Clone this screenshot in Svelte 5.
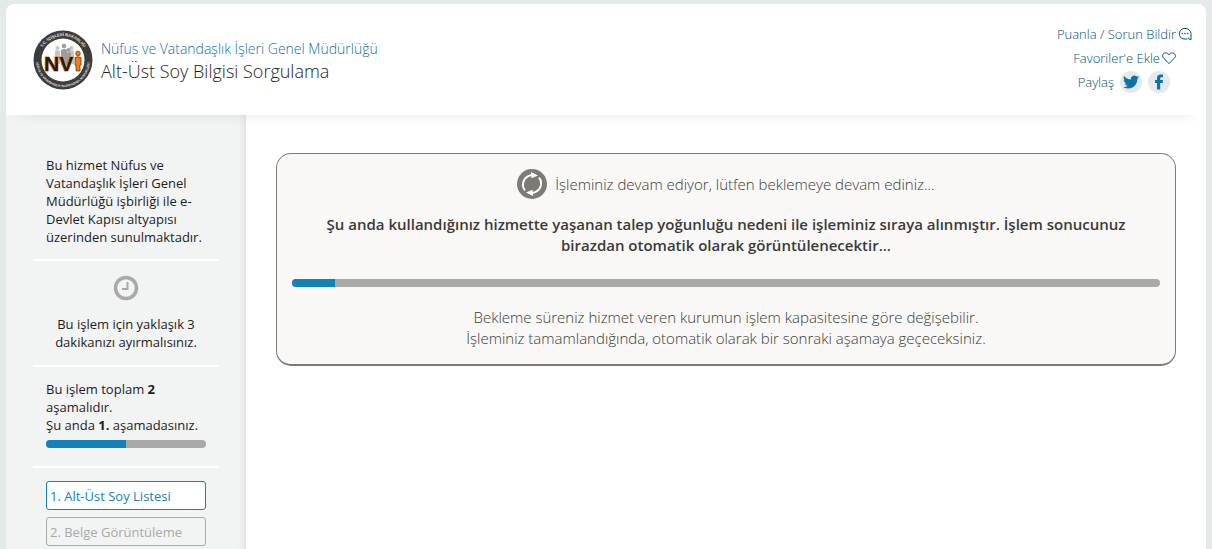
<script lang="ts">
  const institution = 'Nüfus ve Vatandaşlık İşleri Genel Müdürlüğü';
  const service = 'Alt-Üst Soy Bilgisi Sorgulama';

  const steps = ['Alt-Üst Soy Listesi', 'Belge Görüntüleme'];
  let currentStep = $state(1);
  let waitPercent = $state(5);

  let stepPercent = $derived((currentStep / steps.length) * 100);
</script>

<div class="page">
  <header class="service-header">
    <a class="brand" href="#kurum">
      <svg class="logo" viewBox="0 0 60 60" aria-hidden="true">
        <defs>
          <path id="ring-top" d="M6 30a24 24 0 0 1 48 0" />
          <path id="ring-bottom" d="M3.900 23a27 27 0 1 0 52.200 0" />
        </defs>
        <circle cx="30" cy="30" r="29.500" fill="#3b3c3e" />
        <circle cx="30" cy="30" r="21.500" fill="#fff" />
        <text class="ring-text">
          <textPath href="#ring-top" startOffset="50%" text-anchor="middle">T.C. İÇİŞLERİ BAKANLIĞI</textPath>
        </text>
        <text class="ring-text small">
          <textPath href="#ring-bottom" startOffset="50%" text-anchor="middle">NÜFUS VE VATANDAŞLIK İŞLERİ GENEL MÜDÜRLÜĞÜ</textPath>
        </text>
        <g fill="#c4c4c4">
          <circle cx="24.500" cy="18" r="2" /><path d="M22 21q2.500-1.500 5 0v13h-5z" />
          <circle cx="38.500" cy="18" r="2" /><path d="M36 21q2.500-1.500 5 0v13h-5z" />
        </g>
        <g fill="#9c9c9c">
          <circle cx="31" cy="16" r="2.300" /><path d="M28 20q3-2 6 0v15h-6z" />
          <circle cx="35.500" cy="20" r="2" /><path d="M33 23q2.500-1.500 5 0v12h-5z" />
        </g>
        <text class="logo-text" x="11" y="41">NV</text>
        <g fill="#ef7d1a" stroke="#5a2c08" stroke-width="0.700">
          <circle cx="45" cy="23.500" r="2.300" />
          <path d="M42 27.500q3-1.500 6 0v7.500h-1v6h-4v-6h-1z" />
        </g>
      </svg>
      <h1 class="titles">
        <span class="institution">{institution}</span>
        <span class="service">{service}</span>
      </h1>
    </a>

    <nav class="actions" aria-label="Hizmet işlemleri">
      <a class="action" href="#puanla">
        Puanla / Sorun Bildir
        <svg class="action-icon" viewBox="0 0 14 14" aria-hidden="true">
          <path d="M9.500 12H6A5.300 5.300 0 0 1 6 1.500h2A5.300 5.300 0 0 1 13 6.700v6.100q-2.300 0-2.700-2.300" fill="none" stroke="currentColor" />
          <circle cx="4.300" cy="6.500" r="0.800" /><circle cx="7" cy="6.500" r="0.800" /><circle cx="9.700" cy="6.500" r="0.800" />
        </svg>
      </a>
      <a class="action favorite" href="#favori">
        Favoriler'e Ekle
        <svg class="action-icon" viewBox="0 0 14 14" aria-hidden="true">
          <path d="M7 12.500 1.600 7.200C-.5 4.800 1 2 3.500 1.900 5.200 1.800 6.400 2.800 7 4c.6-1.200 1.800-2.200 3.500-2.100 2.500.1 4 2.900 1.900 5.300z" fill="none" stroke="currentColor" />
        </svg>
      </a>
      <div class="share">
        <span>Paylaş</span>
        <a class="social" href="#twitter" aria-label="Twitter">
          <svg width="16" height="16" viewBox="0 0 24 24" aria-hidden="true">
            <path d="M23.950 4.570a10 10 0 0 1-2.820.770 4.960 4.960 0 0 0 2.160-2.720 9.900 9.900 0 0 1-3.120 1.180 4.920 4.920 0 0 0-8.380 4.480A13.930 13.930 0 0 1 1.640 3.160a4.820 4.820 0 0 0-.670 2.480c0 1.710.870 3.210 2.190 4.100a4.900 4.900 0 0 1-2.230-.620v.060a4.920 4.920 0 0 0 3.950 4.830 5 5 0 0 1-2.210.080 4.940 4.940 0 0 0 4.600 3.420A9.870 9.870 0 0 1 0 19.540a13.990 13.990 0 0 0 7.550 2.210c9.050 0 14-7.500 14-13.990 0-.210 0-.420-.020-.630a9.940 9.940 0 0 0 2.460-2.550z" />
          </svg>
        </a>
        <a class="social" href="#facebook" aria-label="Facebook">
          <svg width="16" height="16" viewBox="0 0 16 16" aria-hidden="true">
            <path d="M6 15.500V9H4V6h2V4.200C6 1.800 7.300.5 9.600.5H12v2.800h-1.500c-1 0-1.300.4-1.300 1.200V6H12l-.4 3H9.200v6.500z" />
          </svg>
        </a>
      </div>
    </nav>
  </header>

  <div class="columns">
    <aside class="sidebar">
      <section class="info">
        <p>
          Bu hizmet Nüfus ve Vatandaşlık İşleri Genel Müdürlüğü işbirliği ile e-Devlet Kapısı altyapısı üzerinden
          sunulmaktadır.
        </p>
      </section>

      <section class="info duration">
        <svg width="26" height="26" viewBox="0 0 26 26" fill="none" stroke="#a9a9a7" aria-hidden="true">
          <circle cx="13" cy="13" r="10.500" stroke-width="3.500" />
          <path d="M14.500 7v7H9" stroke-width="2" />
        </svg>
        <p>Bu işlem için yaklaşık 3 dakikanızı ayırmalısınız.</p>
      </section>

      <section class="info">
        <p>Bu işlem toplam <b>{steps.length}</b><br />aşamalıdır.</p>
        <p>Şu anda <b>{currentStep}.</b> aşamadasınız.</p>
        <div class="bar" role="progressbar" aria-label="Aşama" aria-valuenow={stepPercent}>
          <div class="bar-fill" style="width: {stepPercent}%"></div>
        </div>
      </section>

      <ol class="steps">
        {#each steps as step, i}
          <li class="step" class:active={i + 1 === currentStep}>{i + 1}. {step}</li>
        {/each}
      </ol>
    </aside>

    <main class="content">
      <section class="queue" aria-live="polite">
        <p class="status">
          <svg width="30" height="30" viewBox="0 0 30 30" aria-hidden="true">
            <circle cx="15" cy="15" r="15" fill="#7d7b76" />
            <g fill="none" stroke="#fff" stroke-width="2">
              <path d="M8 21.300C3.500 15.500 6.500 7 15.500 6" />
              <path d="M22 8.700C26.500 14.500 23.500 23 14.500 24" />
            </g>
            <path d="M14 3l7 3.600-6.500 2.600zM16 27l-7-3.600 6.500-2.600z" fill="#fff" />
          </svg>
          <span>İşleminiz devam ediyor, lütfen beklemeye devam ediniz...</span>
        </p>
        <p class="notice">
          Şu anda kullandığınız hizmette yaşanan talep yoğunluğu nedeni ile işleminiz sıraya alınmıştır. İşlem
          sonucunuz birazdan otomatik olarak görüntülenecektir...
        </p>
        <div class="bar" role="progressbar" aria-label="Bekleme" aria-valuenow={waitPercent}>
          <div class="bar-fill" style="width: {waitPercent}%"></div>
        </div>
        <p class="hint">
          Bekleme süreniz hizmet veren kurumun işlem kapasitesine göre değişebilir.<br />
          İşleminiz tamamlandığında, otomatik olarak bir sonraki aşamaya geçeceksiniz.
        </p>
      </section>
    </main>
  </div>
</div>

<style>
  :global(body) {
    margin: 0;
    background: #e4e9ea;
    font-family: 'Open Sans', sans-serif;
  }

  p,
  h1,
  ol {
    margin: 0;
    padding: 0;
  }

  a {
    color: #0f72a6;
    text-decoration: none;
  }

  .page {
    display: flex;
    flex-direction: column;
    box-sizing: border-box;
    min-height: 100vh;
    margin: 0 6px;
    padding-top: 4px;
  }

  .service-header {
    display: flex;
    flex-shrink: 0;
    justify-content: space-between;
    align-items: center;
    position: relative;
    box-sizing: border-box;
    min-height: 111px;
    padding: 0 14px 0 27px;
    background: #fff;
    border-radius: 8px 8px 0 0;
    box-shadow: 0 14px 12px -14px rgba(0, 0, 0, 0.1);
  }

  .brand {
    display: flex;
    align-items: center;
    gap: 8px;
  }

  .logo {
    width: 60px;
    height: 60px;
  }

  .ring-text {
    fill: #e6e6e6;
    font: bold 4px 'Liberation Sans', sans-serif;
  }

  .ring-text.small {
    font-size: 3px;
  }

  .logo-text {
    fill: #1c1c1c;
    stroke: #ef7d1a;
    stroke-width: 1.2;
    paint-order: stroke;
    font: bold 21px 'Liberation Sans', sans-serif;
  }

  .titles {
    display: flex;
    flex-direction: column;
    padding-top: 2px;
    font-weight: 300;
  }

  .institution {
    font-size: 14px;
    line-height: 20px;
  }

  .service {
    color: #1d1d1b;
    font-size: 18px;
    line-height: 24px;
  }

  .actions {
    display: flex;
    flex-direction: column;
    align-items: flex-end;
    padding-bottom: 4px;
    font-size: 13px;
    font-weight: 300;
    line-height: 24px;
  }

  .action,
  .share {
    display: flex;
    align-items: center;
    gap: 2px;
    color: #00507c;
  }

  .favorite {
    margin-right: 16px;
  }

  .action-icon {
    width: 14px;
    height: 14px;
    fill: currentColor;
  }

  .share {
    gap: 6px;
    margin-right: 22px;
  }

  .social {
    display: flex;
    align-items: center;
    justify-content: center;
    width: 22px;
    height: 22px;
    background: #e4e9ea;
    border-radius: 50%;
    fill: #0f72a6;
  }

  .columns {
    display: flex;
    flex: 1;
  }

  .sidebar {
    box-sizing: border-box;
    flex: 0 0 240px;
    padding: 28px 27px 0;
    background: #f2f4f4;
    box-shadow: inset -8px 0 8px -8px rgba(0, 0, 0, 0.12);
    color: #1d1d1b;
    font-size: 13px;
    line-height: 18px;
  }

  .info {
    padding: 13px;
    border-bottom: 2px solid #fff;
  }

  .duration {
    padding: 14px 13px;
    text-align: center;
  }

  .duration svg {
    display: block;
    margin: 0 auto 14px;
  }

  .bar {
    height: 8px;
    overflow: hidden;
    background: #a9a9a7;
    border-radius: 4px;
  }

  .bar-fill {
    height: 100%;
    background: #1382bb;
  }

  .sidebar .bar {
    margin: 6px 0 5px;
  }

  .steps {
    padding: 13px 13px 0;
    list-style: none;
  }

  .step {
    margin-bottom: 7px;
    padding: 5px 3px 4px;
    border: 1px solid #a9a9a7;
    border-radius: 3px;
    color: #a9a9a7;
  }

  .step:last-child {
    margin-bottom: 0;
  }

  .step.active {
    background: #fff;
    border-color: #1382bb;
    color: #1382bb;
  }

  .content {
    flex: 1;
    min-width: 0;
    padding: 38px 30px;
    background: #fff;
  }

  .queue {
    padding: 15px;
    background: #f9f8f6;
    border: 1px solid #7d7b76;
    border-bottom-width: 2px;
    border-radius: 15px;
    color: #3a3a39;
    font-size: 15px;
    line-height: 21px;
    text-align: center;
  }

  .status {
    display: flex;
    align-items: center;
    justify-content: center;
    gap: 8px;
    font-weight: 300;
  }

  .notice {
    margin: 15px 0 23px;
    padding: 0 30px;
    font-weight: 600;
  }

  .hint {
    margin-top: 20px;
    font-weight: 300;
  }
</style>
